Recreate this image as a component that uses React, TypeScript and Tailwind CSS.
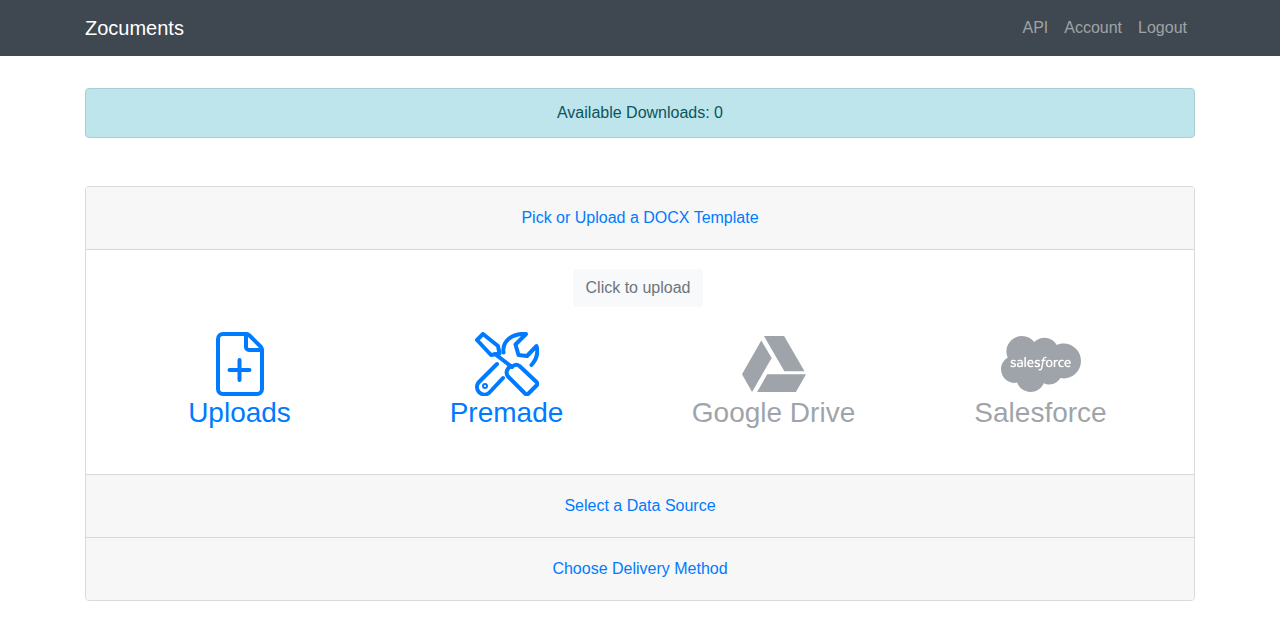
import { FaGoogleDrive, FaSalesforce } from 'react-icons/fa'

function FilePlusIcon() {
  return (
    <svg viewBox="0 0 48 64" className="w-[48px] h-[64px]" fill="none" stroke="currentColor" strokeWidth="4" strokeLinejoin="round" strokeLinecap="round">
      <path d="M7 2H30Q32 2 33.500 3.500L44.500 14.500Q46 16 46 18V57a5 5 0 0 1-5 5H7a5 5 0 0 1-5-5V7a5 5 0 0 1 5-5Z" />
      <path d="M30 2V15a3 3 0 0 0 3 3H46" />
      <path d="M23.500 28V48M13.500 38H33.500" />
    </svg>
  )
}

function ToolsIcon() {
  return (
    <svg viewBox="0 0 64 64" className="w-[64px] h-[64px]" fill="none" stroke="currentColor" strokeWidth="4" strokeLinejoin="round" strokeLinecap="round">
      {/* screwdriver */}
      <path d="M2 8 8 2 23 14 24.500 21.500 16 23 Z" />
      <path d="M20 22 37 35" />
      <path d="M38 34a5.500 5.500 0 0 1 6.500 0L61.500 50a2.500 2.500 0 0 1 0 3.500L53.500 61.500a2.500 2.500 0 0 1-3.500 0L33.500 45a6.500 6.500 0 0 1 4.500-11Z" />
      {/* wrench */}
      <path d="M22 32 3.500 50.500a7.500 7.500 0 0 0 10.500 10.500L28 46" />
      <circle cx="10" cy="54" r="1" />
      <path d="M28.500 20.500C27 10 36 1 51 2L40.500 12.500 43.500 23 52 24 61.500 14C63.500 21 61 28 56.500 33" />
    </svg>
  )
}

function Tile({ label, icon, off }: { label: string; icon: React.ReactNode; off?: boolean }) {
  return (
    <div className={off ? 'flex flex-col items-center text-[#6c757d] opacity-65' : 'flex flex-col items-center text-[#007bff]'}>
      <div className="h-[64px] flex items-center justify-center">{icon}</div>
      <div className="text-[28px] leading-[34px]">{label}</div>
    </div>
  )
}

function Step({ label, last }: { label: string; last?: boolean }) {
  return (
    <div className={last ? 'h-[62px] bg-[#f7f7f7] flex items-center justify-center text-[#007bff]' : 'h-[63px] bg-[#f7f7f7] border-b border-[#d8d8d8] flex items-center justify-center text-[#007bff]'}>
      {label}
    </div>
  )
}

export default function App() {
  return (
    <div className="min-h-[641px] bg-white text-base text-[#212529] font-['Liberation_Sans',sans-serif]">
      <nav className="h-[56px] bg-[#3f4750]">
        <div className="w-[1140px] mx-auto px-[15px] h-full flex items-center justify-between">
          <span className="text-[20px] text-white">Zocuments</span>
          <div className="flex text-white/50">
            <span className="px-2">API</span>
            <span className="px-2">Account</span>
            <span className="px-2">Logout</span>
          </div>
        </div>
      </nav>

      <main className="w-[1140px] mx-auto px-[15px] pt-8">
        <div className="h-[50px] bg-[#bee5eb] border border-[#a8ced4] rounded flex items-center justify-center text-[#0c5460]">
          Available Downloads: 0
        </div>

        <div className="mt-12 border border-[#dadada] rounded overflow-hidden">
          <Step label="Pick or Upload a DOCX Template" />
          <div className="h-[225px] border-b border-[#d8d8d8] px-5 pt-[19px]">
            <div className="flex justify-center">
              <button className="h-[38px] px-[13px] mr-[4px] bg-[#f8f9fa] rounded text-[#6c757d]">Click to upload</button>
            </div>
            <div className="grid grid-cols-4 mt-[25px]">
              <Tile label="Uploads" icon={<FilePlusIcon />} />
              <Tile label="Premade" icon={<ToolsIcon />} />
              <Tile label="Google Drive" icon={<FaGoogleDrive className="w-[64px] h-[64px]" />} off />
              <Tile label="Salesforce" icon={<FaSalesforce className="w-[80px] h-[64px]" />} off />
            </div>
          </div>
          <Step label="Select a Data Source" />
          <Step label="Choose Delivery Method" last />
        </div>
      </main>
    </div>
  )
}
